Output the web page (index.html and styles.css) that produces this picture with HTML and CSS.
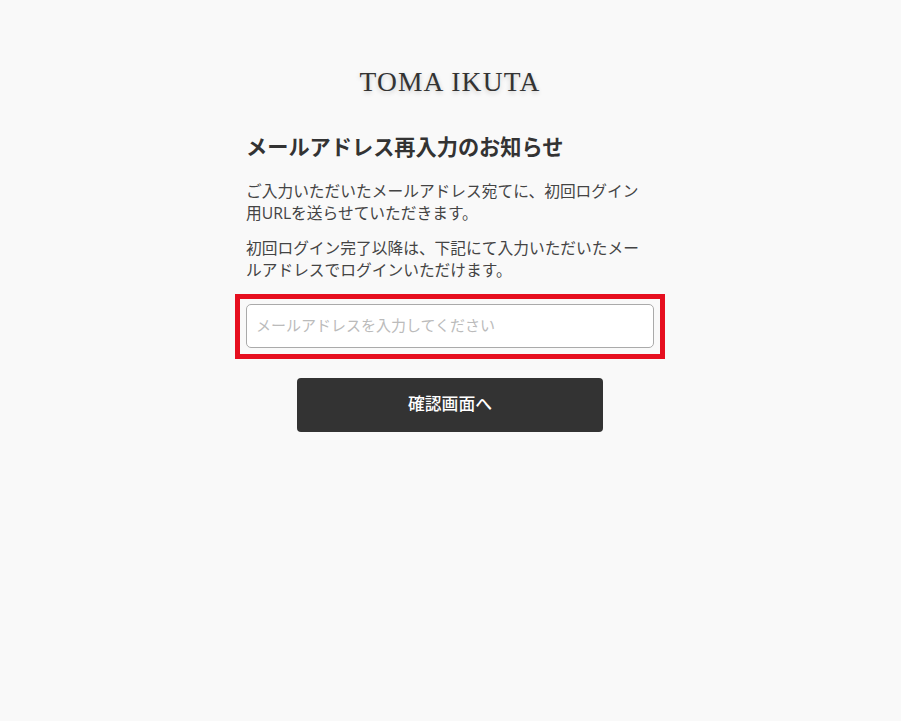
FILE: index.html
```html
<!DOCTYPE html>
<html lang="ja">
<head>
    <meta charset="utf-8">
    <title>メールアドレス再入力のお知らせ</title>
    <link rel="stylesheet" href="styles.css">
</head>
<body>
    <div class="page">
        <div class="logo">TOMA IKUTA</div>
        <h1 class="title">メールアドレス再入力のお知らせ</h1>
        <p class="lead">ご入力いただいたメールアドレス宛てに、初回ログイン用URLを送らせていただきます。</p>
        <p class="lead">初回ログイン完了以降は、下記にて入力いただいたメールアドレスでログインいただけます。</p>
        <div class="mark">
            <input class="mail" type="text" placeholder="メールアドレスを入力してください">
        </div>
        <button class="next" type="button">確認画面へ</button>
    </div>
</body>
</html>
```

FILE: styles.css
```css
*{margin:0;padding:0;box-sizing:border-box;}
html,body{height:100%;}
body{
    padding-right:1px;
    background:#f9f9f9;
    color:#333;
    font-family:"Open Sans","Noto Sans CJK JP",sans-serif;
}
.page{
    display:flex;
    flex-direction:column;
    align-items:center;
    width:408px;
    margin:0 auto;
    padding-top:66px;
}
.logo{
    height:32px;
    font-family:"Liberation Serif",serif;
    font-size:27.5px;
    line-height:32px;
    letter-spacing:1.2px;
    color:#333;
    text-shadow:0 2px 5px rgba(0,0,0,.2);
    white-space:nowrap;
}
.title{
    align-self:stretch;
    margin-top:36px;
    font-size:21.2px;
    line-height:26px;
    font-weight:700;
}
.lead{
    align-self:stretch;
    margin-top:13px;
    color:#444;
    font-size:15.72px;
    line-height:22px;
}
.title + .lead{margin-top:20px;}
.mark{
    flex:none;
    width:430px;
    height:65px;
    margin-top:13px;
    padding:5px 6px;
    border:5px solid #e60f1f;
}
.mail{
    display:block;
    width:100%;
    height:44px;
    padding:0 9px 2px;
    background:#fff;
    border:1px solid #aaa;
    border-radius:5px;
    font-family:inherit;
    font-size:15px;
    color:#333;
}
.mail::placeholder{color:#bbb;opacity:1;}
.next{
    width:306px;
    height:54px;
    margin-top:19px;
    padding-bottom:4px;
    background:#333;
    color:#fff;
    border:0;
    border-radius:4px;
    font-family:inherit;
    font-size:16.8px;
    font-weight:500;
}
```
